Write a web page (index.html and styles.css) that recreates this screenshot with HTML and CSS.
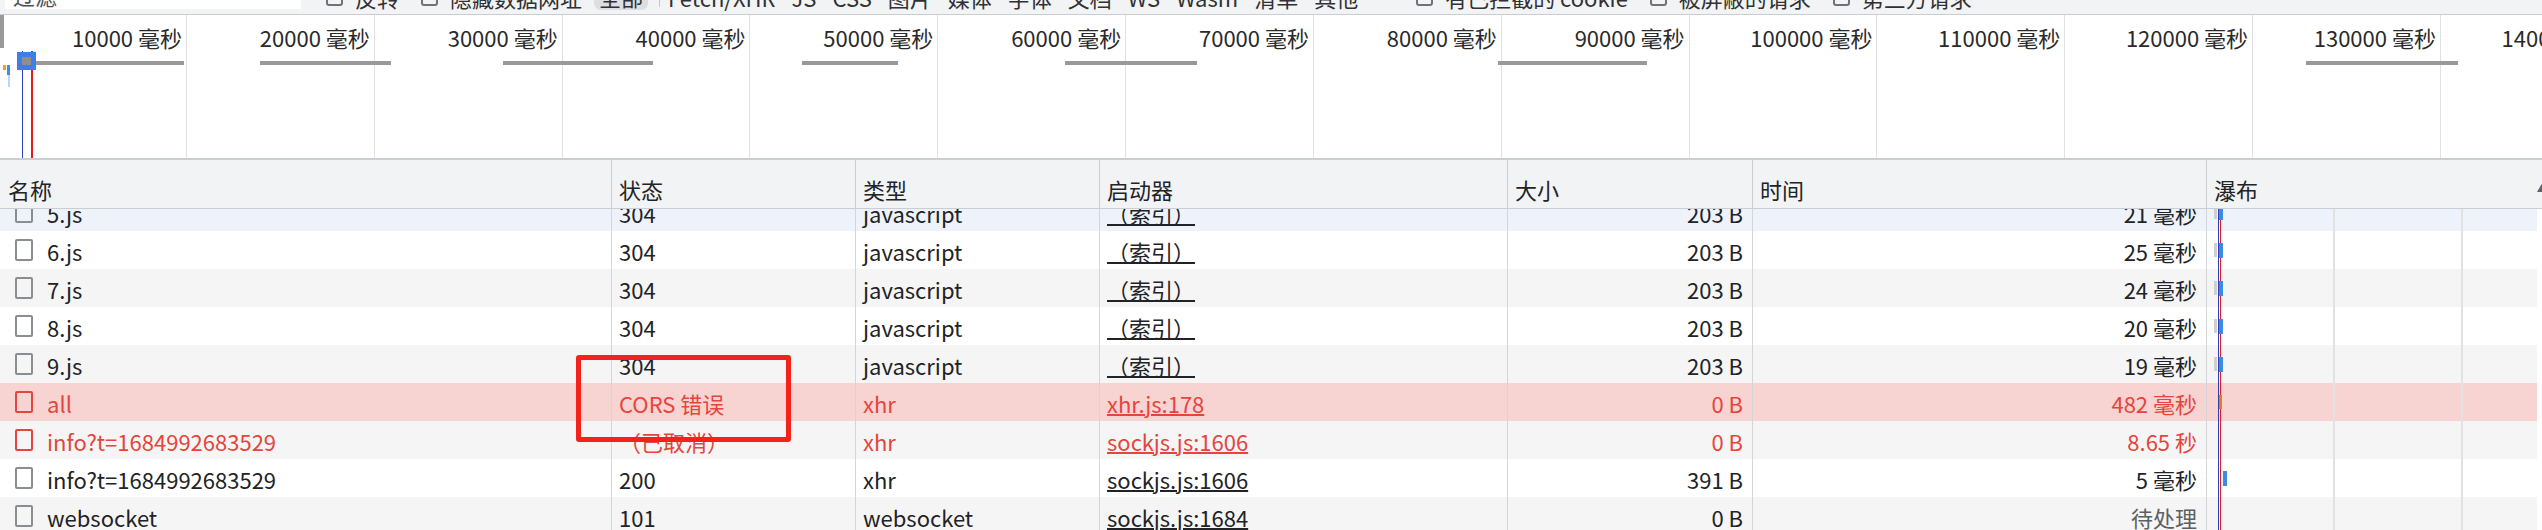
FILE: index.html
```html
<!DOCTYPE html>
<html lang="zh-CN">
<head>
<meta charset="utf-8">
<title>网络</title>
<link rel="stylesheet" href="styles.css">
</head>
<body>
<div class="page">
  <div class="toolbar">
    <div class="tb-inner">
      <div class="filter-input">过滤</div>
      <span class="cb cb-first"></span><span class="tb-label">反转</span>
      <span class="cb"></span><span class="tb-label">隐藏数据网址</span>
      <span class="tb-btn">全部</span>
      <span class="tb-sep"></span>
      <span class="tb-type">Fetch/XHR</span>
      <span class="tb-type">JS</span>
      <span class="tb-type">CSS</span>
      <span class="tb-type">图片</span>
      <span class="tb-type">媒体</span>
      <span class="tb-type">字体</span>
      <span class="tb-type">文档</span>
      <span class="tb-type">WS</span>
      <span class="tb-type">Wasm</span>
      <span class="tb-type">清单</span>
      <span class="tb-type">其他</span>
      <span class="cb cb-wide"></span><span class="tb-label">有已拦截的 cookie</span>
      <span class="cb"></span><span class="tb-label">被屏蔽的请求</span>
      <span class="cb"></span><span class="tb-label">第三方请求</span>
    </div>
  </div>

  <div class="overview">
    <div class="ov-grid">
      <div class="ov-cell ov-first">10000 毫秒</div>
      <div class="ov-cell">20000 毫秒</div>
      <div class="ov-cell">30000 毫秒</div>
      <div class="ov-cell">40000 毫秒</div>
      <div class="ov-cell">50000 毫秒</div>
      <div class="ov-cell">60000 毫秒</div>
      <div class="ov-cell">70000 毫秒</div>
      <div class="ov-cell">80000 毫秒</div>
      <div class="ov-cell">90000 毫秒</div>
      <div class="ov-cell">100000 毫秒</div>
      <div class="ov-cell">110000 毫秒</div>
      <div class="ov-cell">120000 毫秒</div>
      <div class="ov-cell">130000 毫秒</div>
      <div class="ov-cell">140000 毫秒</div>
    </div>
    <div class="ov-handle"></div>
    <div class="ov-mark ov-orange" style="left:3px;top:50px;height:5px"></div>
    <div class="ov-mark ov-blue" style="left:7px;top:50px;height:10px"></div>
    <div class="ov-mark ov-lightblue" style="left:8px;top:60px;height:12px"></div>
    <div class="ov-bar" style="left:30px;width:154px"></div>
    <div class="ov-bar" style="left:260px;width:131px"></div>
    <div class="ov-bar" style="left:503px;width:150px"></div>
    <div class="ov-bar" style="left:802px;width:96px"></div>
    <div class="ov-bar" style="left:1065px;width:132px"></div>
    <div class="ov-bar" style="left:1498px;width:149px"></div>
    <div class="ov-bar" style="left:2306px;width:152px"></div>
    <div class="ov-line ov-line-blue"></div>
    <div class="ov-line ov-line-red"></div>
    <div class="ov-block"><div class="ov-block-inner"></div></div>
  </div>

  <div class="table">
    <div class="row head">
      <div class="cell c-name">名称</div>
      <div class="cell">状态</div>
      <div class="cell">类型</div>
      <div class="cell">启动器</div>
      <div class="cell">大小</div>
      <div class="cell">时间</div>
      <div class="cell c-wf-head">瀑布<span class="sort-arrow"></span></div>
    </div>
    <div class="tbody">
      <div class="tbody-inner">
        <div class="row hover">
          <div class="cell c-name"><span class="doc"></span><span class="nm">5.js</span></div>
          <div class="cell">304</div>
          <div class="cell">javascript</div>
          <div class="cell"><span class="link">（索引）</span></div>
          <div class="cell num">203 B</div>
          <div class="cell num">21 毫秒</div>
          <div class="cell wf"><span class="wf-tick"></span><span class="wf-bar"></span></div>
          <div class="cell sb"></div>
        </div>
        <div class="row">
          <div class="cell c-name"><span class="doc"></span><span class="nm">6.js</span></div>
          <div class="cell">304</div>
          <div class="cell">javascript</div>
          <div class="cell"><span class="link">（索引）</span></div>
          <div class="cell num">203 B</div>
          <div class="cell num">25 毫秒</div>
          <div class="cell wf"><span class="wf-tick"></span><span class="wf-bar"></span></div>
          <div class="cell sb"></div>
        </div>
        <div class="row">
          <div class="cell c-name"><span class="doc"></span><span class="nm">7.js</span></div>
          <div class="cell">304</div>
          <div class="cell">javascript</div>
          <div class="cell"><span class="link">（索引）</span></div>
          <div class="cell num">203 B</div>
          <div class="cell num">24 毫秒</div>
          <div class="cell wf"><span class="wf-tick"></span><span class="wf-bar"></span></div>
          <div class="cell sb"></div>
        </div>
        <div class="row">
          <div class="cell c-name"><span class="doc"></span><span class="nm">8.js</span></div>
          <div class="cell">304</div>
          <div class="cell">javascript</div>
          <div class="cell"><span class="link">（索引）</span></div>
          <div class="cell num">203 B</div>
          <div class="cell num">20 毫秒</div>
          <div class="cell wf"><span class="wf-tick"></span><span class="wf-bar"></span></div>
          <div class="cell sb"></div>
        </div>
        <div class="row">
          <div class="cell c-name"><span class="doc"></span><span class="nm">9.js</span></div>
          <div class="cell">304</div>
          <div class="cell">javascript</div>
          <div class="cell"><span class="link">（索引）</span></div>
          <div class="cell num">203 B</div>
          <div class="cell num">19 毫秒</div>
          <div class="cell wf"><span class="wf-tick"></span><span class="wf-bar"></span></div>
          <div class="cell sb"></div>
        </div>
        <div class="row error selected">
          <div class="cell c-name"><span class="doc"></span><span class="nm">all</span></div>
          <div class="cell">CORS 错误</div>
          <div class="cell">xhr</div>
          <div class="cell"><span class="link">xhr.js:178</span></div>
          <div class="cell num">0 B</div>
          <div class="cell num">482 毫秒</div>
          <div class="cell wf"><span class="wf-gap"></span><span class="wf-orange"></span></div>
          <div class="cell sb"></div>
        </div>
        <div class="row error">
          <div class="cell c-name"><span class="doc"></span><span class="nm">info?t=1684992683529</span></div>
          <div class="cell">（已取消）</div>
          <div class="cell">xhr</div>
          <div class="cell"><span class="link">sockjs.js:1606</span></div>
          <div class="cell num">0 B</div>
          <div class="cell num">8.65 秒</div>
          <div class="cell wf"></div>
          <div class="cell sb"></div>
        </div>
        <div class="row">
          <div class="cell c-name"><span class="doc"></span><span class="nm">info?t=1684992683529</span></div>
          <div class="cell">200</div>
          <div class="cell">xhr</div>
          <div class="cell"><span class="link">sockjs.js:1606</span></div>
          <div class="cell num">391 B</div>
          <div class="cell num">5 毫秒</div>
          <div class="cell wf"><span class="wf-gap2"></span><span class="wf-bar"></span></div>
          <div class="cell sb"></div>
        </div>
        <div class="row">
          <div class="cell c-name"><span class="doc"></span><span class="nm">websocket</span></div>
          <div class="cell">101</div>
          <div class="cell">websocket</div>
          <div class="cell"><span class="link">sockjs.js:1684</span></div>
          <div class="cell num">0 B</div>
          <div class="cell num pending">待处理</div>
          <div class="cell wf"></div>
          <div class="cell sb"></div>
        </div>
      </div>
    </div>
  </div>

  <div class="annot"></div>
</div>
</body>
</html>
```

FILE: styles.css
```css
* { box-sizing: border-box; margin: 0; padding: 0; }

html, body {
  width: 2542px;
  height: 530px;
  overflow: hidden;
  background: #ffffff;
}

body {
  font-family: "Noto Sans CJK SC", "Noto Sans", sans-serif;
  font-size: 22px;
  color: #222326;
}

.page {
  position: relative;
  width: 2542px;
  height: 530px;
  overflow: hidden;
}

/* ---------- toolbar (only the bottom strip is visible) ---------- */
.toolbar {
  height: 15px;
  background: #f1f3f4;
  border-bottom: 1px solid #cacdd1;
  overflow: hidden;
}

.tb-inner {
  display: flex;
  align-items: center;
  height: 34px;
  margin-top: -20px;
  white-space: nowrap;
  line-height: 26px;
  color: #303134;
}

.filter-input {
  align-self: flex-start;
  height: 29px;
  width: 296px;
  margin-left: 5px;
  background: #ffffff;
  color: #4d5156;
  padding-left: 8px;
  line-height: 30px;
}

.cb {
  flex: 0 0 17px;
  width: 17px;
  height: 17px;
  border: 2px solid #6f7378;
  border-radius: 3px;
  margin-left: 22px;
}

.cb-first { margin-left: 25px; }
.cb-wide { margin-left: 50px; }

.tb-label { margin-left: 12px; }

.tb-btn {
  margin-left: 12px;
  height: 26px;
  padding: 0 5px;
  background: #dcdee2;
  border-radius: 7px;
  line-height: 24px;
}

.tb-sep {
  width: 1px;
  height: 20px;
  margin-left: 11px;
  background: #c4c7cc;
}

.tb-type { padding: 0 8px; }

/* ---------- overview ---------- */
.overview {
  position: relative;
  height: 145px;
  border-bottom: 2px solid #cacdd1;
  background: #ffffff;
  overflow: hidden;
}

.ov-grid {
  display: flex;
  height: 100%;
}

.ov-cell {
  flex: 0 0 187.83px;
  border-right: 1px solid #e0e1e3;
  text-align: right;
  padding: 10px 4px 0 0;
  line-height: 24px;
  color: #2a2a2a;
  white-space: nowrap;
}

.ov-first { flex-basis: 187px; }

.ov-handle {
  position: absolute;
  left: 0;
  top: 0;
  width: 4px;
  height: 33px;
  background: #9a9a9a;
}

.ov-mark {
  position: absolute;
  width: 3px;
}
.ov-orange { background: #f29b37; }
.ov-blue { background: #3b8fe6; }
.ov-lightblue { background: #b8d6f5; width: 2px; }

.ov-bar {
  position: absolute;
  top: 46px;
  height: 4px;
  background: #999999;
}

.ov-line {
  position: absolute;
  top: 36px;
  bottom: 0;
  width: 1px;
}
.ov-line-blue { left: 22px; background: #2d3fb8; }
.ov-line-red { left: 31px; width: 2px; background: #e8191b; }

.ov-block {
  position: absolute;
  left: 17px;
  top: 37px;
  width: 19px;
  height: 18px;
  background: #3f7de8;
  padding: 5px 0 0 5px;
}
.ov-block-inner {
  width: 9px;
  height: 8px;
  background: #8e8e8e;
}

/* ---------- table ---------- */
.table { position: relative; }

.row {
  display: grid;
  grid-template-columns: 611px 244px 244px 408px 245px 454px 331px 5px;
  height: 38px;
}

.cell {
  display: flex;
  align-items: center;
  padding-left: 7px;
  padding-top: 2px;
  border-left: 1px solid #d3d5d8;
  white-space: nowrap;
  overflow: hidden;
}

.cell.c-name {
  border-left: none;
  padding-left: 15px;
}

.head {
  height: 49px;
  background: #f1f3f4;
  border-bottom: 1px solid #cacdd1;
}

.head .cell {
  padding-top: 9px;
  border-left-color: #cacdd1;
}

.head .cell.c-name { padding-left: 8px; }

.c-wf-head {
  grid-column: span 2;
  justify-content: space-between;
  overflow: visible;
}

.sort-arrow {
  width: 0;
  height: 0;
  border-left: 7px solid transparent;
  border-right: 7px solid transparent;
  border-bottom: 12px solid #5f6368;
  margin-right: -9px;
  margin-top: -6px;
}

.tbody {
  height: 321px;
  overflow: hidden;
}

.tbody-inner { margin-top: -16px; }

.tbody .row:nth-child(odd) { background: #f5f5f5; }
.tbody .row.hover { background: #eef3fb; }
.tbody .row.selected { background: #f7d3d1; }

.tbody .cell.sb { background: #ffffff; border-left: none; }

.doc {
  flex: 0 0 18px;
  width: 18px;
  height: 22px;
  margin-top: -2px;
  border: 2px solid #8a8d92;
  border-radius: 2px;
}

.nm { margin-left: 14px; }

.num {
  justify-content: flex-end;
  padding-right: 9px;
}

.link {
  text-decoration: underline;
  text-decoration-thickness: 2px;
  text-underline-offset: 1px;
}

.pending { color: #5c5f63; }

.error .cell { color: #e5453c; }
.error .doc { border-color: #e5453c; }

/* waterfall */
.wf {
  padding-left: 7px;
  padding-top: 0;
  background-image:
    linear-gradient(#2d3fb8, #2d3fb8),
    linear-gradient(#e8191b, #e8191b),
    linear-gradient(#e2e2e2, #e2e2e2),
    linear-gradient(#e2e2e2, #e2e2e2);
  background-size: 1px 100%, 1px 100%, 2px 100%, 2px 100%;
  background-position: 11px 0, 13px 0, 126px 0, 254px 0;
  background-repeat: no-repeat;
}

.wf-tick {
  width: 3px;
  height: 14px;
  background: #cfcfcf;
}

.wf-bar {
  width: 4px;
  height: 15px;
  margin-left: 2px;
  background: #3d8ae2;
}

.wf-gap { width: 5px; }
.wf-gap2 { width: 7px; }

.wf-orange {
  width: 3px;
  height: 14px;
  background: #ea7a1c;
}

/* annotation overlay */
.annot {
  position: absolute;
  left: 576px;
  top: 355px;
  width: 215px;
  height: 87px;
  border: 5px solid #f5221b;
  border-radius: 3px;
}
```
